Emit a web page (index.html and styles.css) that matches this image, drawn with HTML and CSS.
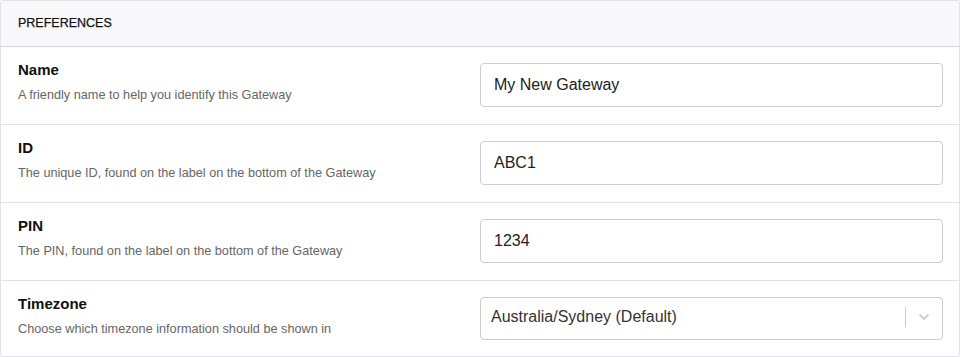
FILE: index.html
```html
<!DOCTYPE html>
<html lang="en">
<head>
    <meta charset="UTF-8">
    <title>Gateway Preferences</title>
    <link rel="stylesheet" href="styles.css">
</head>
<body>

    <!-- Preferences card -->
    <div class="card">
        <div class="card-header">PREFERENCES</div>

        <div class="pref-row">
            <div class="pref-info">
                <div class="pref-label">Name</div>
                <div class="pref-desc">A friendly name to help you identify this Gateway</div>
            </div>
            <div class="pref-field">
                <input type="text" class="text-input" value="My New Gateway">
            </div>
        </div>

        <div class="pref-row">
            <div class="pref-info">
                <div class="pref-label">ID</div>
                <div class="pref-desc">The unique ID, found on the label on the bottom of the Gateway</div>
            </div>
            <div class="pref-field">
                <input type="text" class="text-input" value="ABC1">
            </div>
        </div>

        <div class="pref-row">
            <div class="pref-info">
                <div class="pref-label">PIN</div>
                <div class="pref-desc">The PIN, found on the label on the bottom of the Gateway</div>
            </div>
            <div class="pref-field">
                <input type="text" class="text-input" value="1234">
            </div>
        </div>

        <div class="pref-row">
            <div class="pref-info">
                <div class="pref-label">Timezone</div>
                <div class="pref-desc">Choose which timezone information should be shown in</div>
            </div>
            <div class="pref-field">
                <div class="select-box">
                    <span class="select-value">Australia/Sydney (Default)</span>
                    <span class="select-sep"></span>
                    <span class="select-arrow">
                        <svg width="12" height="8" viewBox="0 0 12 8">
                            <path d="M1.5 1.5 L6 6 L10.5 1.5" fill="none" stroke="#c4c4c4" stroke-width="1.6"/>
                        </svg>
                    </span>
                </div>
            </div>
        </div>
    </div>

</body>
</html>
```

FILE: styles.css
```css
* {
    box-sizing: border-box;
    margin: 0;
    padding: 0;
}

body {
    font-family: "Liberation Sans", Arial, sans-serif;
    background-color: #ffffff;
    color: #222;
}

.card {
    width: 960px;
    border: 1px solid #e2e2e6;
    border-bottom-color: #e4e3ec;
    border-radius: 3px;
    background-color: #fff;
}

.card-header {
    height: 46px;
    padding: 15px 17px 0;
    font-size: 12.5px;
    color: #111;
    -webkit-text-stroke: 0.25px #111;
    background-color: #f8f8fb;
    border-bottom: 1px solid #d5d3e4;
}

.pref-row {
    display: flex;
    align-items: center;
    height: 78px;
    padding: 0 16px 1px 17px;
    border-bottom: 1px solid #e1e0ec;
}

.pref-row:last-child {
    border-bottom: none;
    height: 75px;
}

.pref-info {
    flex: 0 0 462px;
    align-self: flex-start;
    padding-top: 14px;
}

.pref-label {
    font-size: 15px;
    font-weight: bold;
    color: #111;
    line-height: 18px;
}

.pref-desc {
    margin-top: 8px;
    font-size: 12.7px;
    color: #666;
    line-height: 16px;
}

.pref-field {
    flex: 1;
}

.text-input {
    display: block;
    width: 100%;
    height: 44px;
    padding: 0 13px;
    font-family: "Liberation Sans", Arial, sans-serif;
    font-size: 16px;
    color: #222;
    border: 1px solid #cdcdcd;
    border-radius: 4px;
    background-color: #fff;
}

.select-box {
    display: flex;
    align-items: center;
    height: 43px;
    padding: 0 0 2px 10px;
    border: 1px solid #cdcdcd;
    border-radius: 4px;
    font-size: 16px;
    color: #333;
}

.select-value {
    flex: 1;
}

.select-sep {
    width: 1px;
    height: 20px;
    background-color: #cccccc;
}

.select-arrow {
    display: flex;
    align-items: center;
    justify-content: center;
    width: 36px;
}
```
